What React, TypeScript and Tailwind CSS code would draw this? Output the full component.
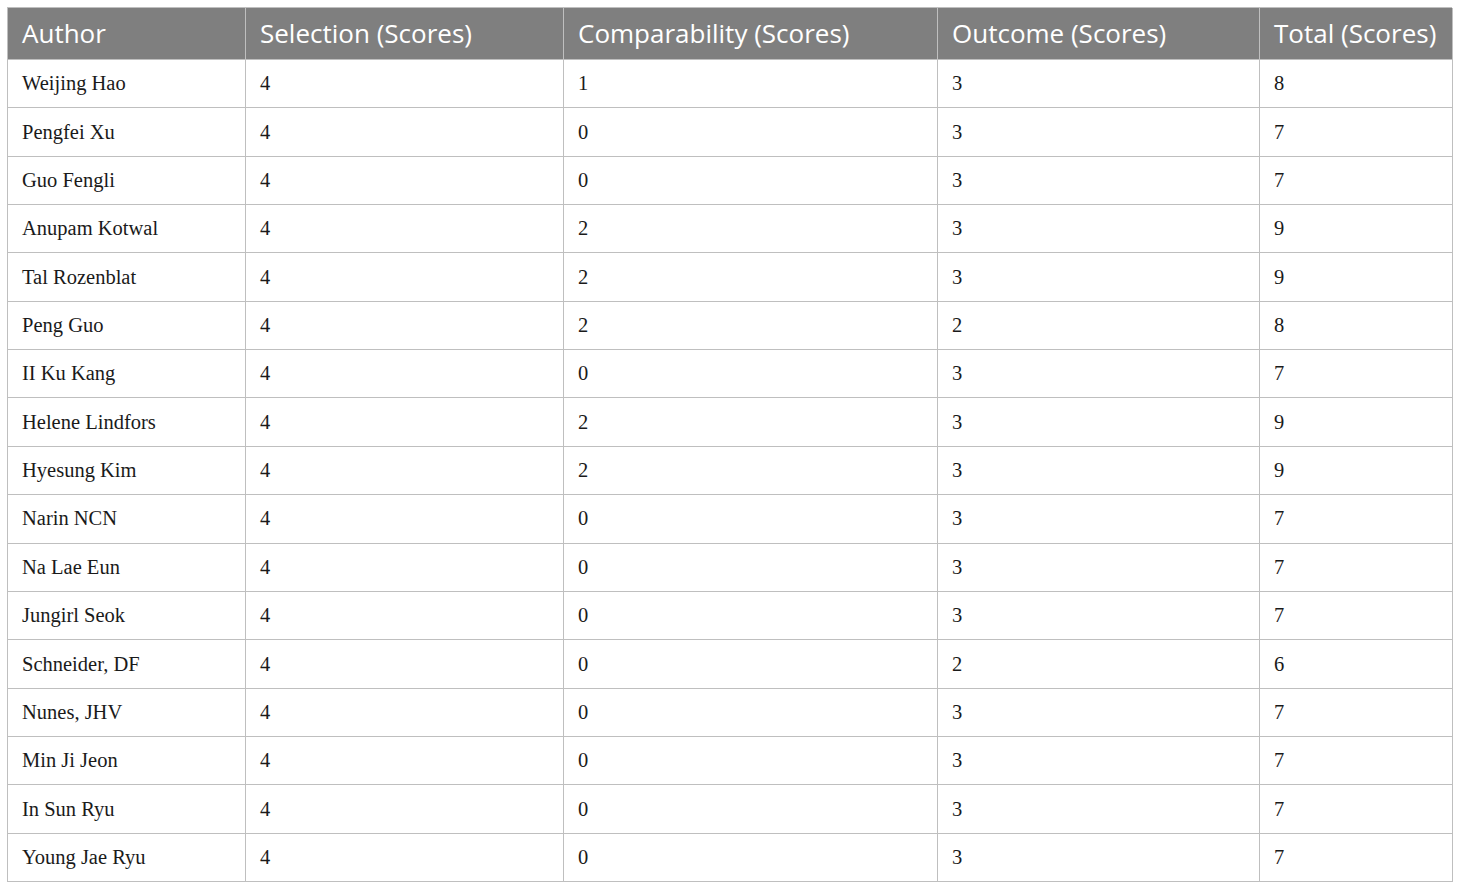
import React from "react";

const rows: [string, string, string, string, string][] = [
  ["Weijing Hao", "4", "1", "3", "8"],
  ["Pengfei Xu", "4", "0", "3", "7"],
  ["Guo Fengli", "4", "0", "3", "7"],
  ["Anupam Kotwal", "4", "2", "3", "9"],
  ["Tal Rozenblat", "4", "2", "3", "9"],
  ["Peng Guo", "4", "2", "2", "8"],
  ["II Ku Kang", "4", "0", "3", "7"],
  ["Helene Lindfors", "4", "2", "3", "9"],
  ["Hyesung Kim", "4", "2", "3", "9"],
  ["Narin NCN", "4", "0", "3", "7"],
  ["Na Lae Eun", "4", "0", "3", "7"],
  ["Jungirl Seok", "4", "0", "3", "7"],
  ["Schneider, DF", "4", "0", "2", "6"],
  ["Nunes, JHV", "4", "0", "3", "7"],
  ["Min Ji Jeon", "4", "0", "3", "7"],
  ["In Sun Ryu", "4", "0", "3", "7"],
  ["Young Jae Ryu", "4", "0", "3", "7"],
];

const headers = [
  "Author",
  "Selection (Scores)",
  "Comparability (Scores)",
  "Outcome (Scores)",
  "Total (Scores)",
];

export default function App() {
  return (
    <div className="w-[1460px] h-[888px] bg-white pt-[7px] pl-[7px]">
      <div className="grid w-[1445px] h-[875px] grid-cols-[238px_318px_374px_322px_193px] grid-rows-[52px_repeat(17,1fr)] border-l border-t border-[#bfbfbf]">
        {headers.map((h) => (
          <div
            key={h}
            className="flex items-center bg-[#7f7f7f] border-r border-b border-[#bfbfbf] pl-[14px] text-white text-[26px] font-['Open_Sans',sans-serif]"
          >
            {h}
          </div>
        ))}
        {rows.map((r, i) =>
          r.map((c, j) => (
            <div
              key={i + "-" + j}
              className="flex items-center border-r border-b border-[#bfbfbf] pl-[14px] text-[#1a1a1a] text-[20.5px] font-['Liberation_Serif',serif]"
            >
              {c}
            </div>
          ))
        )}
      </div>
    </div>
  );
}
